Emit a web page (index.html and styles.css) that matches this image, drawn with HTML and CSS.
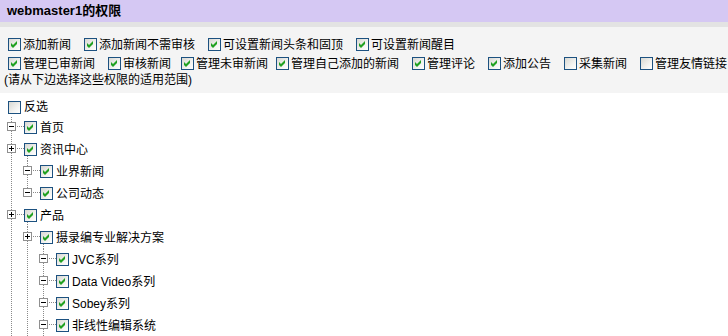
FILE: index.html
```html
<!DOCTYPE html>
<html lang="zh-CN">
<head>
<meta charset="utf-8">
<title>webmaster1的权限</title>
<link rel="stylesheet" href="styles.css">
</head>
<body>
<div class="hd">webmaster1的权限</div>
<div class="panel">
  <div class="perms">
    <label class="pm"><span class="cb on"><svg viewBox="0 0 11 11"><polygon points="2,4 4,6 8,2 8,5 4,9 2,7"/></svg></span>添加新闻</label>
    <label class="pm"><span class="cb on"><svg viewBox="0 0 11 11"><polygon points="2,4 4,6 8,2 8,5 4,9 2,7"/></svg></span>添加新闻不需审核</label>
    <label class="pm"><span class="cb on"><svg viewBox="0 0 11 11"><polygon points="2,4 4,6 8,2 8,5 4,9 2,7"/></svg></span>可设置新闻头条和固顶</label>
    <label class="pm"><span class="cb on"><svg viewBox="0 0 11 11"><polygon points="2,4 4,6 8,2 8,5 4,9 2,7"/></svg></span>可设置新闻醒目</label>
  </div>
  <div class="perms">
    <label class="pm"><span class="cb on"><svg viewBox="0 0 11 11"><polygon points="2,4 4,6 8,2 8,5 4,9 2,7"/></svg></span>管理已审新闻</label>
    <label class="pm g10"><span class="cb on"><svg viewBox="0 0 11 11"><polygon points="2,4 4,6 8,2 8,5 4,9 2,7"/></svg></span>审核新闻</label>
    <label class="pm g8"><span class="cb on"><svg viewBox="0 0 11 11"><polygon points="2,4 4,6 8,2 8,5 4,9 2,7"/></svg></span>管理未审新闻</label>
    <label class="pm"><span class="cb on"><svg viewBox="0 0 11 11"><polygon points="2,4 4,6 8,2 8,5 4,9 2,7"/></svg></span>管理自己添加的新闻</label>
    <label class="pm"><span class="cb on"><svg viewBox="0 0 11 11"><polygon points="2,4 4,6 8,2 8,5 4,9 2,7"/></svg></span>管理评论</label>
    <label class="pm"><span class="cb on"><svg viewBox="0 0 11 11"><polygon points="2,4 4,6 8,2 8,5 4,9 2,7"/></svg></span>添加公告</label>
    <label class="pm"><span class="cb"></span>采集新闻</label>
    <label class="pm"><span class="cb"></span>管理友情链接</label>
  </div>
  <div class="hint">(请从下边选择这些权限的适用范围)</div>
</div>
<div class="inv"><span class="cb"></span><span class="lbl">反选</span></div>
<ul class="tree">
  <li>
    <div class="row"><span class="exp"><svg viewBox="0 0 7 7"><rect x="1" y="3" width="5" height="1"/></svg></span><span class="conn"></span><span class="cb on"><svg viewBox="0 0 11 11"><polygon points="2,4 4,6 8,2 8,5 4,9 2,7"/></svg></span><span class="lbl">首页</span></div>
  </li>
  <li>
    <div class="row open"><span class="exp"><svg viewBox="0 0 7 7"><rect x="1" y="3" width="5" height="1"/><rect x="3" y="1" width="1" height="5"/></svg></span><span class="conn"></span><span class="cb on"><svg viewBox="0 0 11 11"><polygon points="2,4 4,6 8,2 8,5 4,9 2,7"/></svg></span><span class="lbl">资讯中心</span></div>
    <ul>
      <li>
        <div class="row"><span class="exp"><svg viewBox="0 0 7 7"><rect x="1" y="3" width="5" height="1"/></svg></span><span class="conn"></span><span class="cb on"><svg viewBox="0 0 11 11"><polygon points="2,4 4,6 8,2 8,5 4,9 2,7"/></svg></span><span class="lbl">业界新闻</span></div>
      </li>
      <li class="last">
        <div class="row"><span class="exp"><svg viewBox="0 0 7 7"><rect x="1" y="3" width="5" height="1"/></svg></span><span class="conn"></span><span class="cb on"><svg viewBox="0 0 11 11"><polygon points="2,4 4,6 8,2 8,5 4,9 2,7"/></svg></span><span class="lbl">公司动态</span></div>
      </li>
    </ul>
  </li>
  <li>
    <div class="row open"><span class="exp"><svg viewBox="0 0 7 7"><rect x="1" y="3" width="5" height="1"/><rect x="3" y="1" width="1" height="5"/></svg></span><span class="conn"></span><span class="cb on"><svg viewBox="0 0 11 11"><polygon points="2,4 4,6 8,2 8,5 4,9 2,7"/></svg></span><span class="lbl">产品</span></div>
    <ul>
      <li>
        <div class="row open"><span class="exp"><svg viewBox="0 0 7 7"><rect x="1" y="3" width="5" height="1"/><rect x="3" y="1" width="1" height="5"/></svg></span><span class="conn"></span><span class="cb on"><svg viewBox="0 0 11 11"><polygon points="2,4 4,6 8,2 8,5 4,9 2,7"/></svg></span><span class="lbl">摄录编专业解决方案</span></div>
        <ul>
          <li>
            <div class="row"><span class="exp"><svg viewBox="0 0 7 7"><rect x="1" y="3" width="5" height="1"/></svg></span><span class="conn"></span><span class="cb on"><svg viewBox="0 0 11 11"><polygon points="2,4 4,6 8,2 8,5 4,9 2,7"/></svg></span><span class="lbl">JVC系列</span></div>
          </li>
          <li>
            <div class="row"><span class="exp"><svg viewBox="0 0 7 7"><rect x="1" y="3" width="5" height="1"/></svg></span><span class="conn"></span><span class="cb on"><svg viewBox="0 0 11 11"><polygon points="2,4 4,6 8,2 8,5 4,9 2,7"/></svg></span><span class="lbl">Data Video系列</span></div>
          </li>
          <li>
            <div class="row"><span class="exp"><svg viewBox="0 0 7 7"><rect x="1" y="3" width="5" height="1"/></svg></span><span class="conn"></span><span class="cb on"><svg viewBox="0 0 11 11"><polygon points="2,4 4,6 8,2 8,5 4,9 2,7"/></svg></span><span class="lbl">Sobey系列</span></div>
          </li>
          <li>
            <div class="row"><span class="exp"><svg viewBox="0 0 7 7"><rect x="1" y="3" width="5" height="1"/></svg></span><span class="conn"></span><span class="cb on"><svg viewBox="0 0 11 11"><polygon points="2,4 4,6 8,2 8,5 4,9 2,7"/></svg></span><span class="lbl">非线性编辑系统</span></div>
          </li>
        </ul>
      </li>
    </ul>
  </li>
</ul>
</body>
</html>
```
FILE: styles.css
```css
html, body {
  margin: 0;
  padding: 0;
  background: #fff;
  overflow: hidden;
}
body {
  font-family: "Liberation Sans", "Noto Sans CJK SC", sans-serif;
  font-size: 12px;
  color: #000;
}
.hd {
  height: 22px;
  line-height: 22px;
  padding-left: 7px;
  background: #d5c8f3;
  font-size: 13px;
  font-weight: bold;
  border-bottom: 5px solid #e3e3e3;
}
.panel {
  background: #f4f4f4;
  padding: 8px 0 6px 4px;
}
.perms {
  display: flex;
  flex-wrap: nowrap;
  height: 19px;
  padding-left: 4px;
}
.pm {
  display: flex;
  align-items: flex-start;
  flex-shrink: 0;
  white-space: nowrap;
  line-height: 20px;
  margin-right: 13px;
}
.pm.g10 { margin-right: 10px; }
.pm.g8 { margin-right: 8px; }
.pm .cb {
  margin-top: 3px;
  margin-right: 2px;
}
.hint {
  line-height: 15px;
  height: 14px;
  white-space: nowrap;
}
.cb {
  display: inline-block;
  box-sizing: border-box;
  width: 13px;
  height: 13px;
  flex-shrink: 0;
  border: 1px solid #1c5180;
  background: linear-gradient(135deg, #d8d8d2 0%, #f4f4f2 65%, #ffffff 100%);
}
.cb svg {
  display: block;
  width: 11px;
  height: 11px;
  fill: #21a121;
}
.inv {
  display: flex;
  align-items: flex-start;
  height: 21px;
  margin-top: 3px;
  padding-left: 8px;
}
.inv .cb { margin-top: 5px; }
.inv .lbl { line-height: 23px; }
.lbl {
  line-height: 23px;
  margin-left: 3px;
  white-space: nowrap;
}
.tree, .tree ul {
  list-style: none;
  margin: 0;
  padding: 0;
}
.tree { margin-left: 7px; }
.tree ul { margin-left: 16px; }
.tree li {
  background: repeating-linear-gradient(to bottom, #8a8a8a 0 1px, transparent 1px 2px) 4px 0 / 1px 100% no-repeat;
}
.tree li.last {
  background-size: 1px 11px;
}
.row {
  display: flex;
  align-items: flex-start;
  height: 22px;
}
.row.open {
  background: repeating-linear-gradient(to bottom, #8a8a8a 0 1px, transparent 1px 2px) 20px 17px / 1px 5px no-repeat;
}
.exp {
  display: block;
  box-sizing: border-box;
  width: 9px;
  height: 9px;
  margin-top: 5px;
  flex-shrink: 0;
  border: 1px solid #8f8f8f;
  background: #fff;
}
.exp svg {
  display: block;
  width: 7px;
  height: 7px;
  fill: #000;
}
.conn {
  display: block;
  width: 8px;
  height: 1px;
  margin-top: 9px;
  flex-shrink: 0;
  background: repeating-linear-gradient(to right, transparent 0 1px, #8a8a8a 1px 2px);
}
.row .cb { margin-top: 4px; }
```
